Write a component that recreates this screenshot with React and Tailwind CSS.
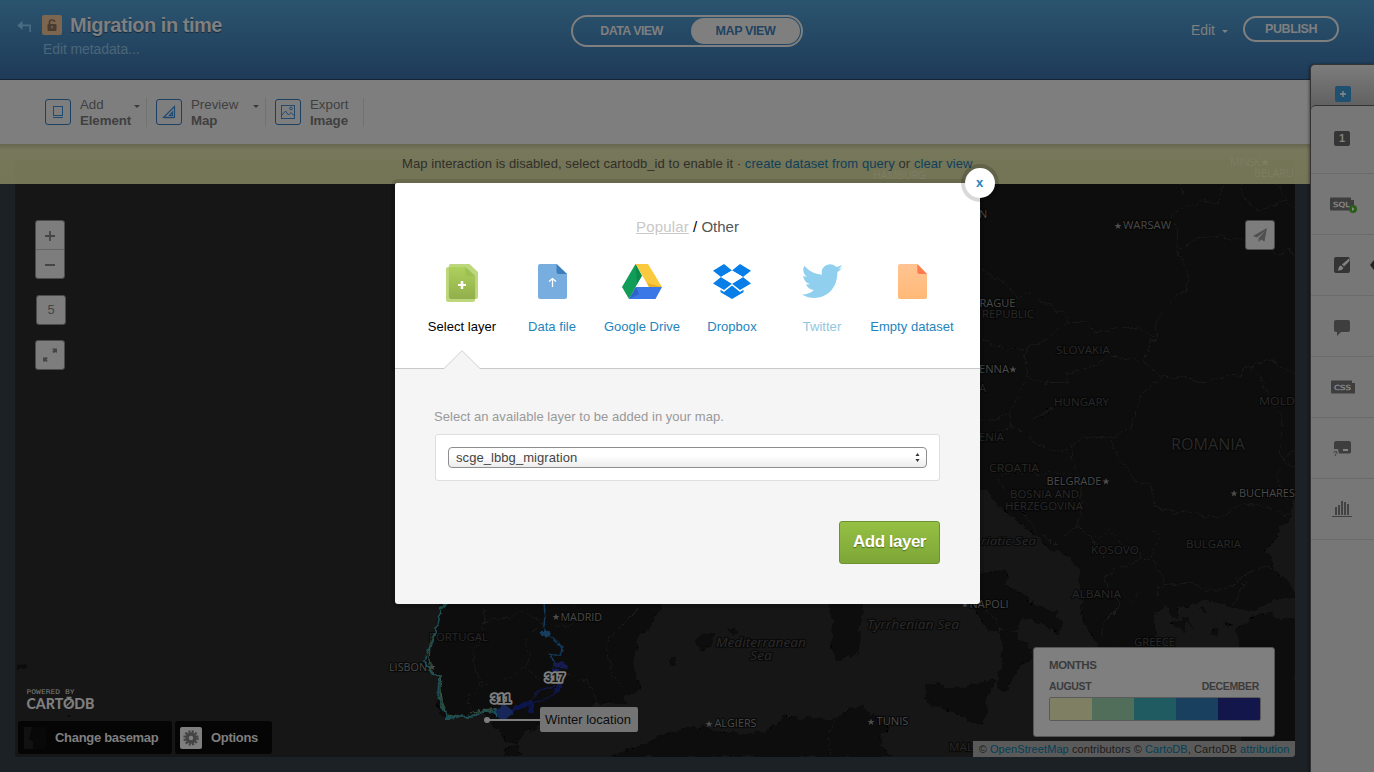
import React from "react";

const SANS = "font-['Liberation_Sans',Arial,sans-serif]";

/* ---------- map ---------- */

const LAND = [
  // Central and eastern Europe
  "M970 180H1300V496L1293 503L1290 521L1279 526L1275 540L1266 552L1272 562L1283 577L1296 590V597L1272 601L1250 612L1232 606L1212 600L1190 604L1178 610L1178 619L1166 617L1155 612L1153 620L1160 632L1180 648H1100L1094 640L1088 627L1081 614L1082 598L1077 580L1080 568L1068 556L1049 549L1036 535L1016 521L1002 508L986 492L970 484Z",
  // Anatolia
  "M1237 630L1250 618L1270 612L1296 618V757H1240V660Z",
  // Italy
  "M970 575L1004 570L1008 577L1004 583L1018 592L1036 603L1054 612L1062 624L1057 634L1046 625L1034 620L1024 619L1017 629L1018 640L1028 643L1030 659L1018 669L1013 681L1006 690L997 688L998 670L1004 664L1002 645L1000 633L992 629L982 624L975 608L965 600Z",
  // Sicily
  "M924 697L927 686L938 684L948 688L966 686L984 682L995 679L989 693L986 707L987 716L983 725L971 721L955 712L932 706Z",
  // Sardinia
  "M826 600L833 622L831 650L839 661L850 656L858 652L860 625L863 600Z",
  // Balearics
  "M694 641L705 633L713 631L711 646L701 650ZM726 628L735 628L738 634L730 632ZM668 662L676 656L677 664L670 667Z",
  // Africa
  "M611 757L630 750L650 741L680 728L700 727L732 732L765 732L786 715L800 720L810 715L822 721L837 718L850 709L862 706L869 713L880 718L890 727L880 736L879 746L892 757ZM503 757L505 749L518 743L521 757Z",
  // Iberia
  "M443 590L438 622L430 648L424 664L432 674L440 677L441 690L437 712L447 717L462 715L477 711L490 717L496 728L507 741L516 743L524 733L540 726L560 722L580 722L594 700L608 704L624 703L625 695L641 690L636 676L632 659L638 642L652 620L662 606V590Z",
];

const SEA = [
  "M1156 640L1154 618L1165 607L1172 617L1178 618L1179 608L1196 603L1214 600L1232 605L1238 614L1250 611L1240 624L1234 638L1242 645L1238 650H1162Z",
  "M1262 611L1272 600L1290 597H1297V618L1278 619Z",
];

const ISLES = "M1170 622L1177 628L1186 633L1181 630L1188 622L1179 621ZM1181 618L1190 624L1194 630L1189 620ZM1199 608L1204 608L1203 613ZM1211 632L1220 628L1217 635ZM1225 622L1232 624L1228 626Z";

const BORDERS = [
  "M1180 184L1184 196L1184 207L1170 216L1178 230L1177 248L1188 276L1186 290L1178 294L1158 318L1155 330L1158 339L1150 340L1144 362L1162 376L1142 394L1130 428L1112 438L1084 437L1069 449L1055 450L1038 444L1012 425L1010 415L1020 388L1028 376L1025 352L1034 345L1051 336L1065 324L1085 323L1096 332L1120 327L1140 328L1157 339",
  "M1184 206L1196 204L1206 200L1218 203L1224 184M1178 250L1195 239L1220 236L1246 242M1266 245L1280 255L1290 250L1295 255M1240 184L1246 200L1258 210L1276 206L1286 200L1295 208M1276 184L1288 198",
  "M980 270L1008 284L1018 298L1030 292L1050 307L1065 314L1069 324M980 342L1000 346L1025 352",
  "M1028 376L1040 382L1066 383L1068 374L1103 361L1110 356L1130 358L1144 362M1162 376L1190 379L1205 384L1216 378L1238 375L1246 367L1270 360L1281 366L1295 372",
  "M1248 367L1262 380L1270 400L1281 417L1282 430L1279 455L1284 462L1295 446M1284 462L1295 468M1276 470L1280 495L1292 497",
  "M980 422L1008 415M1070 445L1075 464L1080 478L1082 490M1012 425L980 443M1112 438L1115 452L1130 472L1135 481L1153 487L1152 500L1162 510L1184 514L1222 517L1242 503L1260 504L1278 512L1290 515",
  "M998 473L1032 474L1060 472L1078 479M998 480L1003 488L1020 503L1030 524L1050 540L1058 548M1080 488L1082 512L1076 526L1096 540L1110 530L1125 546L1137 550L1140 560",
  "M1151 512L1151 528L1162 535L1152 550L1153 558L1162 576L1164 584M1080 524L1064 536L1064 550M1092 540L1106 560L1106 575L1120 566L1150 558M1106 575L1108 590L1120 602L1118 608L1104 622L1100 640M1120 602L1130 602L1143 594L1158 594L1160 586L1190 583L1213 592L1234 586L1240 578L1262 566L1278 570M1234 578L1246 584L1236 600L1234 606",
  "M485 604L484 622L480 632L481 644L473 654L475 668L482 682L470 695L471 710M482 622L510 618L522 610L545 624L570 626L578 614L570 600M545 624L523 640L530 655L526 669L500 682L480 688M526 669L540 678L574 674L592 688L598 704M638 609L622 625L610 636L606 648L612 672L624 690",
  "M836 720L835 726L828 735L830 757M980 606L990 612L998 622L1000 632M1000 630L1017 632L1024 618",
];

function Label({ x, y, size = 11, fill = "#4a4a4a", w, italic, children }) {
  return (
    <text
      x={x}
      y={y}
      fontSize={size}
      fill={fill}
      textLength={w}
      lengthAdjust="spacingAndGlyphs"
      stroke="#060606"
      strokeOpacity=".75"
      strokeWidth="2.5"
      strokeLinejoin="round"
      paintOrder="stroke"
      fontStyle={italic ? "italic" : "normal"}
      fontFamily="'Open Sans','Noto Sans',sans-serif"
    >
      {children}
    </text>
  );
}

function Star({ x, y }) {
  return (
    <path
      transform={`translate(${x} ${y})`}
      d="M0-3.6L.9-1.1 3.5-1 1.4.6 2.2 3.1 0 1.6-2.2 3.1-1.4.6-3.5-1-.9-1.1Z"
      fill="#4e4e4e"
    />
  );
}

function MapCanvas() {
  const c = "#292929";
  return (
    <svg className="block h-[573px] w-[1280px]" viewBox="15 184 1280 573">
      <defs>
        <filter id="rough" x="0" y="0" width="100%" height="100%">
          <feTurbulence type="fractalNoise" baseFrequency="0.11" numOctaves="3" seed="4" />
          <feDisplacementMap in="SourceGraphic" scale="9" xChannelSelector="R" yChannelSelector="G" />
        </filter>
        <filter id="wobble" x="-10%" y="-10%" width="120%" height="120%">
          <feTurbulence type="fractalNoise" baseFrequency="0.2" numOctaves="2" seed="9" />
          <feDisplacementMap in="SourceGraphic" scale="5" xChannelSelector="R" yChannelSelector="G" />
        </filter>
      </defs>
      <rect x="15" y="184" width="1280" height="573" fill="#131313" />
      <g filter="url(#rough)">
        <rect x="0" y="170" width="1330" height="600" fill="#131313" />
        {LAND.map((d) => <path key={d} d={d} fill="#070707" />)}
        {SEA.map((d) => <path key={d} d={d} fill="#131313" />)}
        <path d={ISLES} fill="#070707" />
        {BORDERS.map((d) => <path key={d} d={d} fill="none" stroke="#1b1b1b" strokeWidth="1" />)}
        <path d="M1033 418Q1045 415 1053 408" fill="none" stroke="#131313" strokeWidth="3" />
        <path d="M17 667h8M66 716h4" stroke="#070707" strokeWidth="3" />
      </g>

      <Star x={1118} y={226} />
      <Label x={1123} y={229} w={48}>WARSAW</Label>
      <Label x={979} y={218}>N</Label>
      <Label x={979.5} y={306.5} w={36}>RAGUE</Label>
      <Label x={982} y={318} w={52} size={11.5} fill={c}>REPUBLIC</Label>
      <Label x={1056} y={354} w={54} size={11.5} fill={c}>SLOVAKIA</Label>
      <Label x={979} y={372.5} w={30}>ENNA</Label>
      <Star x={1013} y={369.5} />
      <Label x={979} y={392} size={11.5} fill={c}>A</Label>
      <Label x={1054} y={406} w={55} size={11.5} fill={c}>HUNGARY</Label>
      <Label x={1259} y={405} w={36} size={11.5} fill={c}>MOLD</Label>
      <Label x={979} y={441} w={25} size={11.5} fill={c}>ENIA</Label>
      <Label x={1171} y={450} w={74} size={15.5} fill={c}>ROMANIA</Label>
      <Label x={989} y={472} w={50} size={11.5} fill={c}>CROATIA</Label>
      <Label x={1046.5} y={485} w={55}>BELGRADE</Label>
      <Star x={1106} y={481.5} />
      <Label x={1010} y={497.5} w={69} size={11.5} fill={c}>BOSNIA AND</Label>
      <Label x={1005} y={509.5} w={78} size={11.5} fill={c}>HERZEGOVINA</Label>
      <Star x={1234} y={493.5} />
      <Label x={1239} y={497} w={56}>BUCHARES</Label>
      <Label x={981} y={545} w={55} fill={c} italic>riatic Sea</Label>
      <Label x={1091} y={554} w={48} size={11.5} fill={c}>KOSOVO</Label>
      <Label x={1186} y={548} w={55} size={11.5} fill={c}>BULGARIA</Label>
      <Label x={1072} y={598} w={49} size={11.5} fill={c}>ALBANIA</Label>
      <Label x={1134} y={646} w={41} size={11.5} fill={c}>GREECE</Label>
      <circle cx="965" cy="605" r="2" fill="#444" />
      <Label x={969.5} y={608} w={39}>NAPOLI</Label>
      <Label x={867} y={629} w={92} size={12} fill="#2a2a2a" italic>Tyrrhenian Sea</Label>
      <Label x={716} y={647} w={90} size={12} fill="#2a2a2a" italic>Mediterranean</Label>
      <Label x={750} y={660} w={22} size={12} fill="#2a2a2a" italic>Sea</Label>
      <Star x={709} y={724} />
      <Label x={714.5} y={727} w={42}>ALGIERS</Label>
      <Star x={871} y={722} />
      <Label x={876.5} y={725} w={32}>TUNIS</Label>
      <Label x={949} y={750.5} w={24} size={11.5} fill={c}>MAL</Label>
      <Star x={556} y={617} />
      <Label x={560.5} y={620.5} w={41.5}>MADRID</Label>
      <Label x={429} y={640.5} w={59} size={11.5} fill={c}>PORTUGAL</Label>
      <Label x={389} y={671} w={38}>LISBON</Label>
      <Star x={432} y={667} />

      <g fill="none" strokeLinejoin="round" filter="url(#wobble)">
        <path d="M447 602L441 607L439 620L436 630L430 645L429 660L432 672L440 678L440 692L441 705L447 715L458 717L470 717L482 710L497 709" stroke="#2f4d3c" strokeWidth="1.4" />
        <path d="M449 602L440 610L437 626L434 638L427 653L425 662L432 674L439 677L438 695L443 708L449 719L460 716L472 717L485 711L498 713L505 716" stroke="#1b5058" strokeWidth="1.6" />
        <path d="M440 675L442 700L446 714M470 713L484 709L500 714" stroke="#345344" strokeWidth="1.2" />
        <path d="M544 602L545 615L544 626L547 634L558 642L563 650L561 655L551 655L548 653M551 655L555 664" stroke="#123a5a" strokeWidth="1.5" />
        <path d="M541 634L550 633M545 630L547 637" stroke="#143d5e" strokeWidth="4" />
        <path d="M553 664L560 664L567 667M556 668L555 674" stroke="#121c50" strokeWidth="5" />
        <path d="M558 680L561 686L554 693M532 702L531 714M508 712L520 707L532 702" stroke="#10174c" strokeWidth="4.5" />
        <path d="M555 686L540 690L532 698L533 704L545 699L556 693" stroke="#10174c" strokeWidth="1.3" />
        <path d="M497 712L504 708L511 713L502 717Z" stroke="#142858" strokeWidth="6" fill="#142858" />
        <path d="M495 708L497 718" stroke="#1b5058" strokeWidth="2" />
        <path d="M446 718L452 718" stroke="#1b5058" strokeWidth="4" />
      </g>

      <g fontFamily="'Liberation Sans',Arial,sans-serif" fontSize="12.5" fontWeight="700" fill="#151515" stroke="#7f7f7f" strokeWidth="3.6" strokeLinejoin="round" paintOrder="stroke">
        <text x="545" y="682" textLength="20">317</text>
        <text x="491" y="703" textLength="20">311</text>
      </g>
      <path d="M487 720H540" stroke="#7f7f7f" strokeWidth="2" />
      <circle cx="487" cy="720" r="3" fill="#7f7f7f" />

      <text x="26.5" y="694" fontFamily="'DejaVu Sans Mono',monospace" fontSize="6.5" fill="#7a7a7a" textLength="48" lengthAdjust="spacingAndGlyphs">POWERED BY</text>
      <text x="26.5" y="709" fontFamily="Lato,sans-serif" fontWeight="900" fontSize="14.5" fill="#7f7f7f" textLength="68" lengthAdjust="spacingAndGlyphs">CARTODB</text>
      <path d="M66.5 697.5h5M66.5 706l5-5" stroke="#7f7f7f" strokeWidth="1.3" />
    </svg>
  );
}

function Caret({ className }) {
  return (
    <svg className={className} width="6" height="3" viewBox="0 0 6 3"><path d="M0 0H6L3 3Z" fill="currentColor" /></svg>
  );
}

/* ---------- header and toolbar ---------- */

function Header() {
  return (
    <header className="flex h-20 shrink-0 border-b border-[#162535] bg-linear-to-b from-[#2b546f] to-[#1e3b59] text-[#7f7f7f]">
      <div className="flex w-[571px] pl-[17px] pt-[15px]">
        <svg className="mt-[5px]" width="15" height="13" viewBox="0 0 15 13" fill="none" stroke="#4b6d82" strokeWidth="1.6"><path d="M2 5.4H13.1V12" /><path d="M5.5 .8V10L.2 5.4Z" fill="#4b6d82" stroke="none" /></svg>
        <div className="ml-[10px] flex size-5 items-center justify-center rounded-[2px] bg-[#7d6650]">
          <svg width="10" height="12" viewBox="0 0 10 12"><rect x=".5" y="5" width="9" height="7" rx="1" fill="#4a3c30" /><path d="M2.5 5.5V3a2 2 0 0 1 2-2h1a2 2 0 0 1 2 2" fill="none" stroke="#4a3c30" strokeWidth="1.7" /><path d="M5 7v2.5" stroke="#7d6650" strokeWidth="1.4" /></svg>
        </div>
        <div className="-ml-5 flex flex-col">
          <h1 className="ml-7 text-xl leading-5 font-bold tracking-[-0.47px] whitespace-nowrap [text-shadow:0_1px_1px_#17293b]">Migration in time</h1>
          <p className="mt-[6px] ml-px text-sm leading-4 tracking-[-0.1px] text-[#4c6579]">Edit metadata...</p>
        </div>
      </div>
      <div className="mt-[15px] flex h-8 w-[232px] items-center rounded-full border-2 border-[#7f7f7f] pr-px text-[12.5px] font-bold tracking-[-0.4px]">
        <span className="w-[118px] pr-px text-center leading-[26px] tracking-[-0.6px]">DATA VIEW</span>
        <span className="w-[109px] rounded-full bg-[#7f7f7f] text-center leading-[26px] text-[#1f4360]">MAP VIEW</span>
      </div>
      <div className="ml-auto flex pr-[35px] pt-[15px]">
        <div className="flex h-[30px] items-center text-sm">Edit<Caret className="ml-[7px] mt-[2px]" /></div>
        <div className="ml-[15px] mt-px h-[26px] w-24 rounded-full border-2 border-[#7f7f7f] text-center text-[12.5px] leading-[22px] font-bold tracking-[-0.4px]">PUBLISH</div>
      </div>
    </header>
  );
}

function Tool({ top, bottom, caret, className, children }) {
  return (
    <div className={`flex h-[29px] border-r border-[#727272] ${className}`}>
      <span className="mt-px flex size-[26px] items-center justify-center rounded-[3px] border border-[#1c4163] text-[#1f4a72]">{children}</span>
      <span className="-mt-px ml-[9px] text-[13.3px] leading-4 text-[#404040]">
        <span className="block">{top}</span>
        <b className="block tracking-[-0.1px]">{bottom}</b>
      </span>
      {caret && <Caret className="mt-[7px] mr-[6px] ml-auto text-[#3a3a3a]" />}
    </div>
  );
}

function Toolbar() {
  return (
    <div className="flex h-16 shrink-0 bg-[#7e7e7e] pt-[18px] pl-[45px]">
      <Tool top="Add" bottom="Element" caret className="w-[102px]">
        <svg width="12" height="14" viewBox="0 0 12 14" fill="none" stroke="currentColor"><rect x="1.5" y="1.5" width="9" height="9" /><path d="M1 12.500h10" /></svg>
      </Tool>
      <Tool top="Preview" bottom="Map" caret className="ml-[9px] w-[110px]">
        <svg width="14" height="14" viewBox="0 0 14 14" fill="none" stroke="currentColor" strokeWidth="1.2"><path d="M1.5 12.500L12.500 1.500V12.500Z" /><path d="M7.500 10.500L10.500 7V10.500Z" /><path d="M2 12.500h10" strokeWidth="1.5" /></svg>
      </Tool>
      <Tool top="Export" bottom="Image" className="ml-[9px] w-[89px]">
        <svg width="16" height="16" viewBox="0 0 16 16" fill="none" stroke="currentColor"><rect x="1.5" y="1.5" width="13" height="13" /><path d="M2 11L5.500 7L8.500 11L11 8.500L14.500 12" /><circle cx="11" cy="4.500" r="1.300" /></svg>
      </Tool>
    </div>
  );
}

function Notice() {
  return (
    <div className="relative h-10 w-[1310px] shrink-0 bg-linear-to-b from-[#666650] via-[#77775b] via-15% to-[#757557]">
      <svg className="absolute inset-0" width="1310" height="40" fontFamily="'Open Sans',sans-serif" fontSize="11" fill="#7e7e62">
        <path d="M15 40V20q0-4 4-4H1291q4 0 4 4V40Z" fill="#737355" opacity=".55" />
        <text x="873" y="35" textLength="53">HAMBURG</text>
        <text x="1230" y="22" textLength="40">MINSK★</text>
        <text x="1254" y="33" textLength="40">BELARU</text>
      </svg>
      <p className="relative pl-[402px] text-[13px] leading-10 tracking-[0.075px] whitespace-nowrap text-[#2f2f2a]">
        Map interaction is disabled, select cartodb_id to enable it · <span className="text-[#0f405a]">create dataset from query</span> or <span className="text-[#0f405a]">clear view</span>
      </p>
    </div>
  );
}

/* ---------- map widgets ---------- */

const BTN = "flex size-[30px] items-center justify-center rounded-[3px] border border-[#4a4a4a] bg-[#7d7d7d] text-[#454545]";

function ZoomControls() {
  return (
    <div className="absolute top-9 left-[20px] flex flex-col">
      <div className="flex h-[59px] w-[30px] flex-col rounded-[3px] border border-[#4a4a4a] bg-[#7d7d7d]">
        <span className="flex h-[29px] items-center justify-center border-b border-[#656565] pt-px"><svg width="10" height="10"><path d="M0 5h10M5 0v10" stroke="#454545" strokeWidth="1.8" /></svg></span>
        <span className="flex flex-1 items-center justify-center pt-px"><svg width="10" height="2"><path d="M0 1h10" stroke="#454545" strokeWidth="2" /></svg></span>
      </div>
      <div className={`mt-4 ml-px text-[13px] ${BTN}`}>5</div>
      <div className={`mt-[15px] ${BTN}`}>
        <svg width="16" height="16" viewBox="0 0 16 16" fill="#454545"><path d="M10 1.500h5v4.500l-1.500-1L12.500 6L10 5l1.500-1.500ZM1 14.500v-4.500L2.500 11L3.500 10L6 11l-1.500 1.500L6 14.500Z" /></svg>
      </div>
    </div>
  );
}

function Gear() {
  return (
    <svg width="16" height="16" viewBox="-8 -8 16 16" fill="none">
      <circle r="6.5" stroke="#444" strokeWidth="2.4" strokeDasharray="2 1.4" />
      <circle r="4" stroke="#444" strokeWidth="3.6" />
    </svg>
  );
}

function MapArea() {
  return (
    <div className="flex-1 bg-[#1c2126] px-[15px]">
      <div className="relative h-[573px] w-[1280px] overflow-hidden rounded-b-[3px]">
        <MapCanvas />
        <ZoomControls />
        <div className={`absolute top-9 left-[1230px] ${BTN}`}>
          <svg width="14" height="14" viewBox="0 0 14 14" fill="#505050"><path d="M14 0L0 8L4 9.500L12 3L5.500 10.500V14L8 11.500L11.500 13.500Z" /></svg>
        </div>
        <div className="absolute top-[523px] left-[525px] flex h-[25px] w-[98px] items-center justify-center rounded-[2px] bg-[#747474] pr-[2px] text-[13px] whitespace-nowrap text-[#0d0d0d]">Winter location</div>
        <div className="absolute top-[537px] left-[3px] flex gap-[3px] text-[13px] font-bold tracking-[-0.3px] text-[#7f7f7f]">
          <div className="flex h-[33px] w-[154px] items-center rounded-[3px] bg-[#050505] pl-[6px]">
            <svg width="22" height="22"><rect width="22" height="22" rx="2" fill="#080808" /><path d="M0 0h8L5 12l4 3v7H0Z" fill="#111" /></svg>
            <span className="ml-[9px]">Change basemap</span>
          </div>
          <div className="flex h-[33px] w-[97px] items-center rounded-[3px] bg-[#050505] pl-[5px]">
            <span className="flex size-[22px] items-center justify-center rounded-[2px] bg-[#7f7f7f]"><Gear /></span>
            <span className="ml-[9px]">Options</span>
          </div>
        </div>
        <div className="absolute top-[463px] left-[1018px] h-[90px] w-[242px] rounded-[3px] border border-[#555] bg-[#7f7f7f] px-[15px] pt-[10px] font-bold text-[#3b3b3b]">
          <div className="text-[11.5px] leading-[15px] tracking-[-0.4px]">MONTHS</div>
          <div className="mt-[7px] flex w-[210px] justify-between text-[10.5px] leading-[13px] tracking-[-0.35px]"><span>AUGUST</span><span>DECEMBER</span></div>
          <div className="mt-1 flex h-6 w-[212px] overflow-hidden rounded-[2px] border border-[#5a5a5a]">
            <i className="flex-1 bg-[#7f7f64]" /><i className="flex-1 bg-[#506e5a]" /><i className="flex-1 bg-[#205b62]" /><i className="flex-1 bg-[#19405e]" /><i className="flex-1 bg-[#12164a]" />
          </div>
        </div>
        <div className="absolute right-0 bottom-0 flex h-4 w-[322px] items-center justify-center bg-[#5a5a5a] text-[11px] tracking-[0.09px] whitespace-pre text-[#1a1a1a]">
          © <span className="text-[#033f56]">OpenStreetMap</span> contributors © <span className="text-[#033f56]">CartoDB</span>, CartoDB <span className="text-[#033f56]">attribution</span>
        </div>
      </div>
    </div>
  );
}

/* ---------- right rail ---------- */

function Pixel({ w, children }) {
  return (
    <svg width={w + 4} height="18" viewBox={`0 0 ${w + 4} 18`}>
      <path d={`M1 2.500h${w - 4}v2.500h3v10.500H1q-1 0-1-1v-11q0-1 1-1Z`} fill="#3e3e3e" />
      <text x="3" y="11.500" fontFamily="'DejaVu Sans',sans-serif" fontSize="7" fill="#8a8a8a" stroke="#8a8a8a" strokeWidth=".3" textLength={w - 7} lengthAdjust="spacingAndGlyphs">{children}</text>
      {children === "SQL" && <g><circle cx="23" cy="14" r="4" fill="#285f18" /><path d="M22 12l2.500 2-2.500 2Z" fill="#8a8a8a" /></g>}
    </svg>
  );
}

const RAIL = [
  <span className="mb-[2px] flex h-[15px] w-4 items-center justify-center rounded-[2px] bg-[#353535] text-[11px] font-bold text-[#828282]">1</span>,
  <span className="ml-1 flex"><Pixel w={24}>SQL</Pixel></span>,
  <svg width="16" height="16" viewBox="0 0 16 16"><rect width="16" height="16" rx="2" fill="#343434" /><path d="M15.500 1L8 7.500L10 9.500L15.500 4ZM7 8.500Q4.500 9 4.500 12L3.500 13.500Q8 14 9.500 11Z" fill="#828282" /></svg>,
  <svg className="mt-[3px]" width="16" height="16" viewBox="0 0 16 16" fill="#3e3e3e"><path d="M2 0H14q2 0 2 2V10q0 2-2 2H7L3 16V12H2Q0 12 0 10V2Q0 0 2 0Z" /></svg>,
  <span className="mb-px ml-[5px] flex"><Pixel w={24}>CSS</Pixel></span>,
  <svg width="18" height="16" viewBox="0 0 18 16"><path d="M3 1H16q2 0 2 2V12q0 1.500-2 1.500H6L5 9H1V3Q1 1 3 1Z" fill="#3e3e3e" /><path d="M10 10h5" stroke="#828282" strokeWidth="2" /><text x="0" y="16" fontSize="8" fontWeight="700" fill="#3e3e3e">?</text></svg>,
  <svg width="20" height="18" viewBox="0 0 20 18" stroke="#3e3e3e" fill="none"><path d="M0 16.500h20" /><path d="M4 15V7M7 15V5M10 15V1M13 15V2M16 15V4" strokeWidth="1.8" /></svg>,
];

function Rail() {
  return (
    <aside className="absolute top-16 right-0 bottom-0 w-16 overflow-hidden rounded-tl-[5px] border-t border-l border-[#333] bg-linear-to-b from-[#7c7c7c] to-[#606060] to-[42px] shadow-[-1px_0_3px_#0006]">
      <div className="flex h-10 items-center justify-center pt-[18px]">
        <span className="flex size-4 items-center justify-center rounded-[2px] bg-[#20506f]"><svg width="6" height="6"><path d="M0 3h6M3 0v6" stroke="#8a8a8a" strokeWidth="1.3" /></svg></span>
      </div>
      <div className="relative h-full rounded-tl-[5px] border-t border-[#333] bg-[#777]">
        {RAIL.map((icon, i) => (
          <div key={i} className={`flex items-center justify-center border-b border-[#6b6b6b] pr-px ${i === 0 ? "h-[68px]" : "h-[61px]"}`}>{icon}</div>
        ))}
        <svg className="absolute top-[154px] right-0" width="4" height="10"><path d="M4 0L0 5L4 10Z" fill="#222" /></svg>
      </div>
    </aside>
  );
}

/* ---------- dialog ---------- */

const SOURCES = [
  { name: "Select layer", color: "text-black", icon: (
    <svg width="32" height="38" viewBox="0 0 28 38" preserveAspectRatio="none"><defs><linearGradient id="gl" x2="0" y2="1"><stop stopColor="#aed05c" /><stop offset="1" stopColor="#91af4b" /></linearGradient></defs>
      <path d="M4 0H20.500L28 8V33q0 2-2.500 2V36q0 2-2 2H2q-2 0-2-2V5Q0 3 2.500 3V2Q2.500 0 4 0Z" fill="#bdd77d" /><path d="M2.500 3H17L25.500 12V35H4.500q-2 0-2-2Z" fill="url(#gl)" /><path d="M17 3L25.500 12H19q-2 0-2-2Z" fill="#9cc052" /><path d="M14 17v8M10.500 21h7" stroke="#fff" strokeWidth="2.2" /></svg>) },
  { name: "Data file", color: "text-[#2484bd]", icon: (
    <svg width="29" height="35" viewBox="0 0 25 35" preserveAspectRatio="none"><path d="M2 0H16L25 10V33q0 2-2 2H2q-2 0-2-2V2Q0 0 2 0Z" fill="#78ade0" /><path d="M16 0L25 10H18q-2 0-2-2Z" fill="#3d7ebd" /><path d="M12.500 23V14M9.500 17.500L12.500 14.500L15.500 17.500" fill="none" stroke="#fff" strokeWidth="1.1" /></svg>) },
  { name: "Google Drive", color: "text-[#2484bd]", icon: (
    <svg width="40" height="35" viewBox="0 0 40 35"><path d="M13.500 0L20 12L7 35L0 23Z" fill="#109d58" /><path d="M13.500 0H26L40 23H27Z" fill="#fbc93d" /><path d="M14 23H40L33.500 35H7Z" fill="#3b78e7" /><path d="M7 35L14 23L17 30Z" fill="#2f63c7" /><path d="M20 12L13.500 0L15 20Z" fill="#0b8b4c" /><path d="M20 12L26.300 23H13.700Z" fill="#fff" /><path d="M27 23L40 23L25 19Z" fill="#e8af27" /></svg>) },
  { name: "Dropbox", color: "text-[#2484bd]", icon: (
    <svg width="38" height="35" viewBox="0 0 38 35" fill="#087ee8"><path d="M11 0L19 6.500L8 13L0 6.700ZM27 0L38 6.700L30 13L19 6.500ZM0 19.500L8 13L19 19.800L11 26ZM30 13L38 19.500L27 26L19 19.800ZM19 21.500L27 28L30.500 25.800V28.200L19 35L7.500 28.200V25.800L11 28Z" /><path d="M8 13L19 19.800L30 13L19 6.500Z" fill="#fff" /></svg>) },
  { name: "Twitter", color: "text-[#92c6e0]", icon: (
    <svg width="41" height="35" viewBox="1 2 22 19" preserveAspectRatio="none"><path d="M23 4.200c-.8.400-1.700.6-2.600.7.900-.5 1.700-1.400 2-2.400-.9.500-1.900.9-2.900 1.100A4.600 4.600 0 0 0 11.700 7.800C7.900 7.600 4.500 5.800 2.300 3c-1.200 2.100-.6 4.700 1.400 6-.7 0-1.400-.2-2-.6 0 2.100 1.500 4 3.600 4.500-.7.200-1.400.2-2.100.1.600 1.800 2.300 3.100 4.200 3.100A9 9 0 0 1 1 18.500c7.500 4.700 19 .9 19-12.100.9-.6 1.600-1.400 3-2.200Z" fill="#90d0ee" /></svg>) },
  { name: "Empty dataset", color: "text-[#2484bd]", icon: (
    <svg width="29" height="35" viewBox="0 0 30 35" preserveAspectRatio="none"><defs><linearGradient id="og" x2="0" y2="1"><stop stopColor="#ffc493" /><stop offset="1" stopColor="#ffb976" /></linearGradient></defs><path d="M2 0H20L30 10V33q0 2-2 2H2q-2 0-2-2V2Q0 0 2 0Z" fill="url(#og)" /><path d="M20 0L30 10H22q-2 0-2-2Z" fill="#ff7b4d" /></svg>) },
];

function Dialog() {
  return (
    <div className="absolute inset-0 pt-[183px] pl-[395px]">
      <section className="relative h-[421px] w-[585px] rounded-[3px] bg-[#f5f5f5] shadow-[0_0_0_4px_#0000001a]">
        <div className="relative h-[186px] rounded-t-[3px] border-b border-[#c9c9c9] bg-white">
          <p className="pt-9 text-center text-[15px] leading-4 text-black"><span className="tracking-[0.15px] text-[#c8c8c8] underline">Popular</span> / <span className="text-[#555]">Other</span></p>
          <div className="mt-[29px] flex pl-[22px]">
            {SOURCES.map((s) => (
              <div key={s.name} className="flex w-[90px] flex-col items-center">
                <span className="flex h-[42px] items-start">{s.icon}</span>
                <span className={`mt-[13px] text-[13px] leading-4 tracking-[0.03px] whitespace-nowrap ${s.color}`}>{s.name}</span>
              </div>
            ))}
          </div>
          <svg className="absolute -bottom-px left-[49px]" width="36" height="19" viewBox="0 0 36 19"><path d="M0 18.500L18 .7L36 18.500V19H0Z" fill="#f5f5f5" /><path d="M0 18.500L18 .7L36 18.500" fill="none" stroke="#d0d0d0" /></svg>
        </div>
        <div className="px-10 pt-10">
          <p className="-ml-px text-[13px] leading-4 tracking-[0.03px] text-[#999]">Select an available layer to be added in your map.</p>
          <div className="mt-[9px] h-[47px] w-[505px] rounded-[3px] border border-[#dedede] bg-white p-3">
            <div className="flex h-[21px] w-[479px] items-center justify-between rounded-[4px] border border-[#8e8e8e] bg-linear-to-b from-white from-40% to-[#ececec] pr-[6px] pl-[7px] text-[13px] text-[#444]">
              <span className="tracking-[0.07px]">scge_lbbg_migration</span>
              <svg width="5" height="9" viewBox="0 0 5 9" fill="#333"><path d="M.5 3L2.500 0L4.500 3ZM.5 6H4.500L2.500 9Z" /></svg>
            </div>
          </div>
          <div className="mt-10 ml-auto h-[43px] w-[101px] rounded-[3px] border border-[#6c9230] bg-linear-to-b from-[#95c043] to-[#7da637] text-center text-[17px] leading-[39px] font-bold tracking-[-0.5px] text-white [text-shadow:0_1px_1px_#4d6e1c]">Add layer</div>
        </div>
        <div className="absolute -top-[15px] left-[569.5px] flex size-[30px] items-center justify-center rounded-full bg-white pb-px text-[13px] font-bold text-[#2484bd] shadow-[0_0_0_4px_#00000026]">x</div>
      </section>
    </div>
  );
}

export default function App() {
  return (
    <div className={`relative flex h-[772px] w-[1374px] flex-col overflow-hidden bg-[#1c2126] ${SANS}`}>
      <Header />
      <Toolbar />
      <Notice />
      <MapArea />
      <Rail />
      <Dialog />
    </div>
  );
}
